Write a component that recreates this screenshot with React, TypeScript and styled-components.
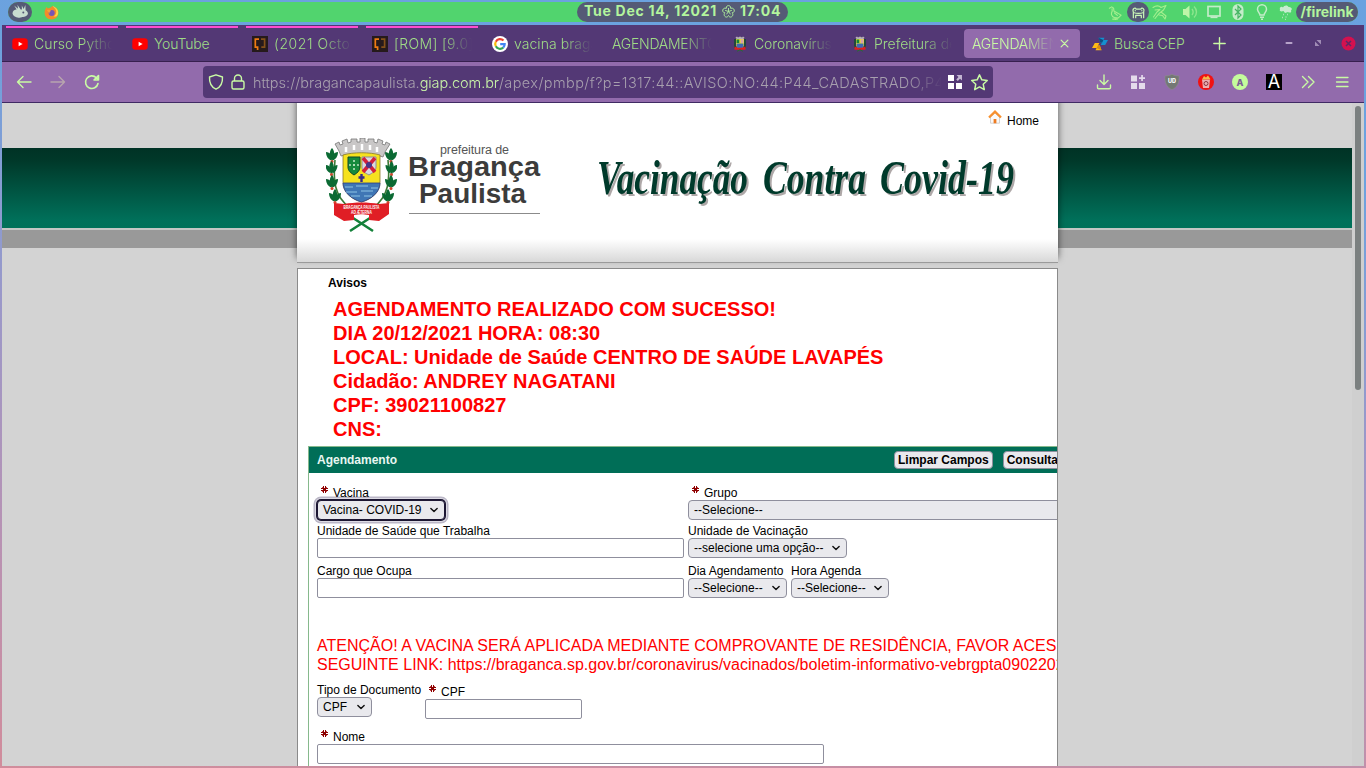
import React from 'react';
import styled, { createGlobalStyle, css } from 'styled-components';

const Global = createGlobalStyle`
  * { box-sizing: border-box; }
  body { margin: 0; overflow: hidden; background: #6fa1dc; }
`;

const ui = `Inter, "Noto Sans", sans-serif`;
const page = `"Liberation Sans", Arial, sans-serif`;

const Desktop = styled.div`
  width: 1366px;
  height: 768px;
  padding: 2px 2px 2px;
  display: flex;
  flex-direction: column;
  overflow: hidden;
  background: linear-gradient(186deg, #6aa2e0 0%, #6ca2de 20%, #9a98c9 48%, #b892b3 75%, #d18c9b 100%);
  font-family: ${ui};
`;

/* ---------- desktop bar ---------- */
const TopBar = styled.header`
  height: 20px;
  margin: 0 6px 3px;
  border-radius: 10px;
  background: #51d46e;
  display: grid;
  grid-template-columns: 569px 211px 1fr;
  align-items: center;
`;
const BarLeft = styled.div`
  display: flex;
  align-items: center;
  gap: 12px;
`;
const Pill = styled.div<{ $w: number }>`
  width: ${(p) => p.$w}px;
  height: 20px;
  border-radius: 10px;
  background: #555a76;
  color: #b3f59d;
  display: flex;
  align-items: center;
  justify-content: center;
  font-size: 14px;
  line-height: 20px;
  font-weight: 700;
  white-space: pre;
`;
const Clock = styled(Pill)`
  gap: 5px;
  letter-spacing: 0.75px;
  padding-bottom: 2px;
`;
const Tray = styled.div`
  display: flex;
  justify-content: flex-end;
  align-items: center;
`;
const TrayIcon = styled.span<{ $w: number; $gap?: number }>`
  width: ${(p) => p.$w}px;
  margin-left: ${(p) => p.$gap ?? 0}px;
  display: flex;
  justify-content: center;
`;

/* ---------- browser window ---------- */
const Browser = styled.div`
  flex: 1;
  min-height: 0;
  display: flex;
  flex-direction: column;
`;
const TabStrip = styled.div`
  height: 37px;
  flex: none;
  background: #533875;
  border-bottom: 1px solid #37204f;
  display: flex;
`;
const Tab = styled.div<{ $active?: boolean; $marked?: boolean }>`
  width: 116px;
  height: 29px;
  margin: 4px 2px 0;
  padding: 0 8px;
  border-radius: 4px;
  display: flex;
  align-items: center;
  gap: 6px;
  color: #9fdc86;
  ${(p) => p.$active && css`background: #926bac; color: #c9fba4; padding-right: 11px;`}
  ${(p) => p.$marked && css`
    &::before {
      content: '';
      position: absolute;
      width: 112px;
      height: 2px;
      margin: -33px 0 0 -6px;
      background: #ff4bd0;
    }
  `}
`;
const TabText = styled.span<{ $sp: number; $fade: boolean }>`
  flex: 1;
  min-width: 0;
  overflow: hidden;
  white-space: nowrap;
  font-size: 14px;
  font-weight: 300;
  line-height: 20px;
  letter-spacing: ${(p) => p.$sp}px;
  ${(p) => p.$fade && css`mask-image: linear-gradient(to left, transparent 0, #000 30px);`}
`;
const NewTab = styled.div`
  width: 34px;
  display: flex;
  align-items: center;
  justify-content: center;
`;
const WindowButtons = styled.div`
  margin-left: auto;
  display: flex;
  align-items: center;
  gap: 19px;
  padding-right: 8px;
`;
const Toolbar = styled.div`
  height: 41px;
  flex: none;
  background: #926bac;
  border-bottom: 1px solid #3f2a63;
  display: flex;
  align-items: center;
`;
const NavButtons = styled.div`
  width: 201px;
  display: flex;
  align-items: center;
  gap: 18px;
  padding-left: 14px;
`;
const UrlBar = styled.div`
  width: 790px;
  height: 32px;
  border-radius: 4px;
  background: #533875;
  display: flex;
  align-items: center;
  padding: 0 5px;
`;
const UrlText = styled.div`
  width: 690px;
  margin: 2px 6px 0 7px;
  overflow: hidden;
  white-space: nowrap;
  font-size: 14.5px;
  font-weight: 300;
  line-height: 20px;
  color: #a79fae;
  mask-image: linear-gradient(to left, transparent 0, #000 36px);
`;
const UrlPart = styled.span<{ $sp: number; $host?: boolean }>`
  letter-spacing: ${(p) => p.$sp}px;
  ${(p) => p.$host && 'color: #c9f5a8;'}
`;
const Extensions = styled.div`
  margin-left: auto;
  padding-right: 14px;
  display: flex;
  align-items: center;
  gap: 18px;
`;
const LetterBadge = styled.span<{ $round?: boolean }>`
  width: 16px;
  height: 16px;
  display: flex;
  align-items: center;
  justify-content: center;
  border-radius: ${(p) => (p.$round ? 8 : 0)}px;
  background: ${(p) => (p.$round ? '#c4fb9c' : '#000')};
  color: ${(p) => (p.$round ? '#7b5a96' : '#fff')};
  font-size: ${(p) => (p.$round ? 9 : 18)}px;
  font-weight: ${(p) => (p.$round ? 800 : 400)};
  line-height: 1;
`;

/* ---------- web page ---------- */
const Viewport = styled.div`
  flex: 1;
  min-height: 0;
  display: flex;
  background: #d3d3d3;
  font-family: ${page};
  color: #000;
`;
const Site = styled.div`
  flex: 1;
  overflow: hidden;
  padding-left: 295px;
  background:
    linear-gradient(#003225, #003829 15%, #00705a 90%, #007159) 0 45px / 100% 80px no-repeat,
    linear-gradient(#c4c6c4, #c4c6c4) 0 125px / 100% 2px no-repeat,
    linear-gradient(#999, #999) 0 127px / 100% 18px no-repeat,
    #d3d3d3;
`;
const ScrollTrack = styled.div`
  width: 12px;
  padding: 3px 3px;
  background: #cfcfcf;
`;
const ScrollThumb = styled.div`
  width: 6px;
  height: 284px;
  border-radius: 3px;
  background: #7b8080;
`;
const Banner = styled.div`
  width: 761px;
  height: 160px;
  border-bottom: 1px solid #9a9a9a;
  background: linear-gradient(#fff 0, #fff 136px, #d8d8d8 159px);
  box-shadow: 0 -5px 7px 0 rgba(0, 0, 0, 0.6);
  display: grid;
  grid-template-columns: 301px 1fr;
`;
const BannerRight = styled.div`
  display: flex;
  flex-direction: column;
`;
const HomeLink = styled.a`
  align-self: flex-end;
  margin: 7px 19px 0 0;
  height: 18px;
  display: flex;
  gap: 5px;
  font-size: 12px;
  line-height: 22px;
`;
const Brand = styled.div`
  display: flex;
  padding: 35px 0 0 29px;
`;
const BrandName = styled.div`
  width: 131px;
  height: 76px;
  margin: 0 0 0 12px;
  border-bottom: 1px solid #8b8b8b;
  color: #3c3c3b;
`;
const Panel = styled.main`
  width: 761px;
  height: 560px;
  margin-top: 5px;
  border: 1px solid #8a8a8a;
  background: #fff;
  overflow: hidden;
  padding: 7px 0 0 10px;
  font-size: 12px;
`;
const PanelTitle = styled.h2`
  margin: 0 0 7px 20px;
  font-size: 12px;
  line-height: 14px;
`;
const Notice = styled.div`
  margin-left: 25px;
  color: #f00;
  font-size: 20px;
  font-weight: 700;
  line-height: 24px;
  padding-bottom: 5px;
`;
const FormBox = styled.section`
  width: 900px;
  height: 400px;
  border: 1px solid #86b98c;
`;
const FormHead = styled.div`
  height: 26px;
  background: #006e57;
  display: flex;
  align-items: center;
  padding-left: 8px;
  color: #e9f7f1;
  font-weight: 700;
`;
const HeadButton = styled.button`
  height: 18px;
  padding: 0 3px;
  margin-right: 10px;
  border: 1px solid #8f8f9d;
  border-radius: 4px;
  background: #e9e9ed;
  color: #000;
  font: 700 12px/14px ${page};
  white-space: nowrap;
`;
const Spacer = styled.div<{ $w: number }>`
  width: ${(p) => p.$w}px;
  flex: none;
`;
const FormBody = styled.div`
  padding: 13px 0 0 8px;
`;
const Row = styled.div<{ $h: number }>`
  height: ${(p) => p.$h}px;
  display: flex;
  gap: 4px;
  align-items: flex-start;
`;
const FieldBox = styled.div<{ $w: number; $drop?: number }>`
  width: ${(p) => p.$w}px;
  flex: none;
  padding-top: ${(p) => p.$drop ?? 0}px;
`;
const LabelLine = styled.label`
  display: flex;
  height: 14px;
  line-height: 14px;
  white-space: nowrap;
  position: relative;
  z-index: 1;
`;
const Mark = styled.svg`
  width: 7px;
  height: 7px;
  margin: 0 5px 0 4px;
`;
const Input = styled.div`
  height: 20px;
  border: 1px solid #8f8f9d;
  border-radius: 2px;
  background: #fff;
`;
const Select = styled.div<{ $w: number; $focus?: boolean }>`
  width: ${(p) => p.$w}px;
  height: 20px;
  padding: 0 5px 0 5px;
  border: 1px solid #8f8f9d;
  border-radius: 4px;
  background: #e9e9ed;
  display: flex;
  align-items: center;
  justify-content: space-between;
  line-height: 18px;
  white-space: nowrap;
  ${(p) => p.$focus && css`
    border-color: #1d1733;
    box-shadow: 0 0 0 1px #1d1733, 0 0 0 2px #dddbe4, 0 0 0 3.5px #bbb7c7;
  `}
`;
const Warning = styled.p`
  margin: 0;
  height: 47px;
  color: #f00;
  font-size: 16px;
  line-height: 19px;
  white-space: nowrap;
`;

/* ---------- icons ---------- */
const Stroke = ({ d, c = '#c9fba4', s = 16, w = 1.4, o = 1 }: { d: string; c?: string; s?: number; w?: number; o?: number }) => (
  <svg width={s} height={s} viewBox="0 0 16 16" fill="none" stroke={c} strokeWidth={w} strokeLinecap="round" strokeLinejoin="round" opacity={o}>
    <path d={d} />
  </svg>
);
const YouTube = () => (
  <svg width="16" height="16" viewBox="0 0 16 16"><rect x="0.3" y="2.3" width="15.4" height="11.4" rx="3" fill="#f00" /><path d="M6.6 5.8v4.4L10.6 8z" fill="#fff" /></svg>
);
const Xda = () => (
  <svg width="16" height="16" viewBox="0 0 16 16" fill="none" strokeWidth="1.7">
    <rect width="16" height="16" fill="#261a1c" />
    <path d="M7 3.1H3.3v8H5.6v3" stroke="#ee7a13" /><path d="M9 3.1h3.6v8H9.3" stroke="#84501a" />
  </svg>
);
const Google = () => (
  <svg width="16" height="16" viewBox="0 0 16 16" fill="none" strokeWidth="2.2">
    <circle cx="8" cy="8" r="8" fill="#fff" />
    <path d="M11.5 4.6A4.8 4.8 0 0 0 3.8 5.7" stroke="#ea4335" /><path d="M3.8 5.7a4.8 4.8 0 0 0 0 4.6" stroke="#fbbc05" />
    <path d="M3.8 10.3a4.8 4.8 0 0 0 7.4 1.3" stroke="#34a853" /><path d="M11.2 11.6A4.6 4.6 0 0 0 12.7 8.1H8.2" stroke="#4285f4" />
  </svg>
);
const CrestMini = () => (
  <svg width="16" height="16" viewBox="0 0 16 16">
    <path d="M3.500 1.500 5 .5l1 1 2-1 2 1 1-1 1.500 1-1.500 2H5z" fill="#b5b0b5" /><path d="M2 3h2v9H2zM12 3h2v9h-2z" fill="#23483b" />
    <path d="M4 3h8v6.500l-2 2.500H6L4 9.500z" fill="#e9dc35" /><path d="M4.500 7.500h7v2.300L10 12H6l-1.500-2z" fill="#3f69b5" />
    <rect x="4.500" y="3.500" width="2.800" height="3.500" fill="#15803d" /><rect x="8.700" y="3.500" width="2.800" height="3.500" fill="#d8a0a8" />
    <path d="M2.500 10.500l3 1.300h5l3-1.300v3.300H2.500z" fill="#e02020" /><path d="M5 15.300 8 13.800l3 1.500" stroke="#286b35" fill="none" />
  </svg>
);
const Correios = () => (
  <svg width="16" height="16" viewBox="0 0 16 16">
    <path d="M6.500 1.800h6L11.400 4H16l-2.800 5H8.600L10 6.600 8.200 6.500z" fill="#1590cf" />
    <path d="M9.500 14.200h-6L4.600 12H0l2.800-5h4.600L6 9.400l1.800.1z" fill="#fdbb16" />
    <path d="M6.500 1.800 11.400 4l-1.200 2.600-2-.1z" fill="#0c4f80" /><path d="M9.500 14.200 4.600 12l1.300-2.500 2 .1z" fill="#d98e10" />
  </svg>
);
const Rabbit = () => (
  <svg width="18" height="16" viewBox="0 0 18 16">
    <path d="M1.500 9.500C1.500 7 3.500 5.700 5.600 5.600L3.200 1.500l3.900 3.300L6.400.8l3.300 4.700 1.200-.1L10.800 1.400l1.800 3.700 1.800-4 .2 5.200c1.700 1 2.400 2.400 2.300 3.200-.2 2.400-2.700 3.200-5.900 3.600-1 1.300-8.500.8-9.500-3.600z" fill="#c8ddd0" />
    <circle cx="12.300" cy="8.600" r="1" fill="#555a76" />
  </svg>
);
const Firefox = () => (
  <svg width="15" height="15" viewBox="0 0 16 16">
    <path d="M1 5.500 2.600 2l1.500 1.800C5 3.200 6 3 6.700 3L9.500.7c.3 1.400 1.300 1.800 2.300 2.600L12.200 2c5.300 4 3.800 13.300-4 13.500C2.300 15.500-.4 10.500 1 5.500z" fill="#f38b2a" />
    <path d="M9.500.7c.3 2 3.600 2.600 3.600 6.800 0 2.400-1.400 4-3 4.600 3 1 5-.9 5-4.200C15.100 4 12 2.600 9.500.7z" fill="#fbd648" />
    <circle cx="8.200" cy="8.600" r="3.200" fill="#7755b5" /><path d="M3 5.500c1.500-.8 3.500-.4 4.500.6L5.800 7.700l.6 2z" fill="#f3a13c" />
  </svg>
);
const Flower = () => (
  <svg width="13" height="13" viewBox="-6.500 -6.500 13 13" fill="none" stroke="#b3f59d" strokeWidth=".9">
    <path d="M-2.100-3.200C-3-6.800 3-6.800 2.100-3.200 5.800-4.500 7.500.8 3.700 1.200 6 4.500 1.500 7.500 0 4-1.500 7.500-6 4.500-3.700 1.200-7.500.8-5.800-4.500-2.100-3.200z" />
    <path d="M0 0v-3.500M0 0l3.300-1.100M0 0l2 2.800M0 0l-2 2.800M0 0l-3.300-1.100" />
  </svg>
);
const Crest = () => {
  const leaves = [16, 29, 43, 57];
  return (
    <svg width="71" height="96" viewBox="0 0 71 96">
      <path d="M9 22C7 42 8 58 24 70M62 22c2 20 1 36-15 48" fill="none" stroke="#3c7a36" strokeWidth="1.600" />
      {leaves.map((y, i) => {
        const x = [6, 5.500, 6, 9][i];
        return [x, 71 - x].map((cx) => (
          <g key={cx} transform={`translate(${cx} ${y})`} fill="#0b6a33">
            <path d="M0-6C3-3 3 3 0 7-3 3-3-3 0-6z" /><path d="M-6-2C-2-2 1 2 1 7-4 6-6 2-6-2zM6-2C2-2-1 2-1 7 4 6 6 2 6-2z" /><circle cy="7.500" r="1.500" fill="#d3452a" />
          </g>
        ));
      })}
      <path d="M13 13 9 6l4-2 1 3 3-1-1-3 5-2 1 4 3-1V1h6v3h3V0h5v4h3V1h6v3l3 1 1-4 5 2-1 3 3 1 1-3 4 2-5 8-2 5C47 15 24 15 15 18z" fill="#c9c7c7" stroke="#777" strokeWidth=".8" />
      <path d="M20 9v5M28 7v5M36 6v6M44 7v5M51 9v5" stroke="#fff" strokeWidth="2.500" />
      <path d="M17 17c10-3 27-3 37 0v27c0 10-8 17-18.500 20C25 61 17 54 17 44z" fill="#f6e21f" stroke="#8a7a2b" strokeWidth=".8" />
      <path d="M17 45h37c0 9-8 16-18.500 19C25 61 17 54 17 45z" fill="#3f76b5" stroke="#2c3e85" strokeWidth=".8" />
      <path d="M19 49h8M30 48h12M45 50h7M20 54h11M35 53h12M25 58h9M38 58h8" stroke="#8ec4e6" strokeWidth="1.200" />
      <path d="M22 19h12v10c0 4-3 6-6 8-3-2-6-4-6-8z" fill="#168a3c" stroke="#10492a" />
      <path d="M28 22v11M23 27h10" stroke="#b9e2bd" strokeWidth="1.600" strokeDasharray="2 2" />
      <path d="M36 19h14v10c0 4-4 6-7 8-4-2-7-4-7-8z" fill="#d9d9df" stroke="#8c8c98" />
      <path d="m37 20 12 14M49 20 37 34" stroke="#d3203c" strokeWidth="3.600" /><circle cx="43" cy="27" r="3" fill="#45358a" />
      <path d="M35.500 36v8M32.500 39.500h6" stroke="#3a2a86" strokeWidth="2.400" />
      <path d="m24 93 23-15M47 93 24 78" stroke="#14813a" strokeWidth="2.600" />
      <path d="M8 65l10 1c11-2 24-2 35 0l10-1v11l-10 7-10-1v-5c-6-1-10-1-15 0v5l-10 1-10-6z" fill="#e01e25" />
      <text x="35.500" y="70.500" textAnchor="middle" textLength="36" lengthAdjust="spacingAndGlyphs" fontSize="4.500" fontWeight="900" fill="#fff" fontFamily="Liberation Sans">BRAGANÇA PAULISTA</text>
      <text x="35.500" y="76" textAnchor="middle" textLength="21" lengthAdjust="spacingAndGlyphs" fontSize="4.500" fontWeight="900" fill="#fff" fontFamily="Liberation Sans">AD ÆTERNA</text>
    </svg>
  );
};
const BrandText = () => (
  <svg width="133" height="74" viewBox="0 0 133 74" fontFamily="Liberation Sans" fill="#3c3c3b">
    <text x="31" y="16" fontSize="12.500" textLength="69" fill="#555">prefeitura de</text>
    <text x="-1" y="38" fontSize="28.500" fontWeight="700" textLength="132" lengthAdjust="spacingAndGlyphs">Bragança</text>
    <text x="10" y="65" fontSize="28.500" fontWeight="700" textLength="107" lengthAdjust="spacingAndGlyphs">Paulista</text>
  </svg>
);
const Script = styled.svg`
  margin-top: 15px;
  filter: drop-shadow(2px 2px 0.5px rgba(120, 110, 110, 0.6));
  font-family: "Liberation Serif", serif;
  font-style: italic;
  font-weight: 700;
`;
const Lettering = () => (
  <Script width="440" height="80" viewBox="0 0 440 80" fill="#003a2b">
    <text x="-1" y="51" fontSize="49" textLength="151" lengthAdjust="spacingAndGlyphs">Vacinação</text>
    <text x="165" y="51" fontSize="49" textLength="103" lengthAdjust="spacingAndGlyphs">Contra</text>
    <text x="282" y="51" fontSize="49" textLength="134" lengthAdjust="spacingAndGlyphs">Covid-19</text>
  </Script>
);
const Home = () => (
  <svg width="14" height="14" viewBox="0 0 14 14">
    <path d="M2.500 7v6.200h9V7L7 2.800z" fill="#fafafa" stroke="#c9c9c9" strokeWidth=".8" />
    <path d="M1 7.500 7 1.700l6 5.800" fill="none" stroke="#f7902f" strokeWidth="2.300" /><path d="M5.600 9h2.800v4.300H5.600z" fill="#ee7b22" />
  </svg>
);
const Req = () => (
  <Mark viewBox="0 0 7 7" fill="#8d0000" shapeRendering="crispEdges">
    <path d="M2 0h1v7H2zM4 0h1v7H4zM0 2h7v1H0zM0 4h7v1H0zM3 3h1v1H3z" />
    <path d="M1 1h1v1H1zM5 1h1v1H5zM1 5h1v1H1zM5 5h1v1H5z" fill="#c05050" />
  </Mark>
);
const Chevron = () => <Stroke d="M3 5.500 8 10.500 13 5.500" c="#111" s={10} w={2.300} />;

const tabs: { t: string; icon?: React.ReactNode; marked?: boolean; active?: boolean; fade?: boolean; sp: number }[] = [
  { t: 'Curso Python', icon: <YouTube />, marked: true, fade: true, sp: 0.1 },
  { t: 'YouTube', icon: <YouTube />, marked: true, sp: -0.2 },
  { t: '(2021 October)', icon: <Xda />, marked: true, fade: true, sp: 0.55 },
  { t: '[ROM] [9.0] Lin', icon: <Xda />, marked: true, fade: true, sp: 0.35 },
  { t: 'vacina bragança', icon: <Google />, fade: true, sp: 0.05 },
  { t: 'AGENDAMENTO', fade: true, sp: -0.25 },
  { t: 'Coronavírus -', icon: <CrestMini />, fade: true, sp: -0.1 },
  { t: 'Prefeitura de B', icon: <CrestMini />, fade: true, sp: 0 },
  { t: 'AGENDAMENTO', active: true, fade: true, sp: -0.25 },
  { t: 'Busca CEP', icon: <Correios />, sp: -0.1 },
];

const SelectField = ({ label, w, box, req, focus, children }: { label: string; w: number; box?: number; req?: boolean; focus?: boolean; children: string }) => (
  <FieldBox $w={box ?? w}>
    <LabelLine>{req && <Req />}{label}</LabelLine>
    <Select $w={w} $focus={focus}>{children}<Chevron /></Select>
  </FieldBox>
);
const InputField = ({ label, w, req, drop }: { label: string; w: number; req?: boolean; drop?: number }) => (
  <FieldBox $w={w} $drop={drop}>
    <LabelLine>{req && <Req />}{label}</LabelLine>
    <Input />
  </FieldBox>
);

export default function App() {
  return (
    <Desktop>
      <Global />
      <TopBar>
        <BarLeft><Pill $w={24}><Rabbit /></Pill><Firefox /></BarLeft>
        <Clock $w={211}>Tue Dec 14, 12021<Flower />17:04</Clock>
        <Tray>
          <TrayIcon $w={24}><Stroke s={15} w={1.200} c="#a5ef8f" d="M1.500 3.500 4 2l2 1.500.3 3 7.700 4.300-3 3-4-.3C3.500 12.500 3 9 4.500 6.500L4.300 4M7 8.500l3 2.500M8 13.500v2M5 15h5" /></TrayIcon>
          <Pill $w={22}><Stroke s={15} w={1.300} c="#c8f5b6" d="M2.500 13.500V7.500C1 4 4.500 2 5.500 4.500h5C11.500 2 15 4 13.500 7.500V13.500M2.500 8q5.500 2 11 0M5 13.500v-2.500h6v2.500M4.500 6h.1M11.500 6h.1" /></Pill>
          <TrayIcon $w={22}><Stroke s={16} w={1.100} c="#a5ef8f" d="M1 3.500c3-2 6-2 8 0l5-2-2.500 4.500L7 9.500l-4 5M3 6l5-.5L5 8 1.500 13M9 8l5 4-1 3-2.500-3.500L7 11" /></TrayIcon>
          <TrayIcon $w={24} $gap={7}>
            <svg width="16" height="16" viewBox="0 0 16 16" fill="none" stroke="#8ee68e" strokeWidth="1.400"><path d="M1 5h2.500L7.500 1.500v13L3.500 11H1z" fill="#bdf5a8" stroke="none" /><path d="M10 5c1.500 2 1.500 4 0 6M12 2.500c3.300 3 3.300 8 0 11" /></svg>
          </TrayIcon>
          <TrayIcon $w={24}><svg width="14" height="14" viewBox="0 0 14 14" fill="none" stroke="#c3ecc9" strokeWidth="1.700"><rect x="1" y="1.500" width="12" height="9.500" /><path d="M3.500 12.300h7" /></svg></TrayIcon>
          <TrayIcon $w={24}><svg width="12" height="16" viewBox="0 0 12 16"><rect x=".5" width="11" height="16" rx="5.500" fill="#c3ecc9" /><path d="m3 5 6 6-3 3V2l3 3-6 6" fill="none" stroke="#45b564" strokeWidth="1.200" /></svg></TrayIcon>
          <TrayIcon $w={24}><svg width="12" height="16" viewBox="0 0 12 16" fill="none" stroke="#c3ecc9" strokeWidth="1.500"><path d="M4 11C4 9 1.500 8 1.500 5.300a4.500 4.500 0 0 1 9 0C10.500 8 8 9 8 11zM4 13.200h4M5 15.200h2" /></svg></TrayIcon>
          <TrayIcon $w={22}><svg width="15" height="15" viewBox="0 0 15 15" fill="#c8ecd0"><path d="M2 4.500C1 2 4 .8 5 2.500 6-.2 10-.2 10.500 2 13 1.500 15 4 13 5.500 14 8 11 8 10 7L7 8 5.500 6C3.500 7 1 6.500 2 4.500z" /><path d="M5 9.500h1M9 9.500h1M4 12.500h1M7.500 12h1M7 14.500h1" stroke="#a8e3b6" strokeWidth="1.300" /></svg></TrayIcon>
          <Pill $w={62}>/firelink</Pill>
        </Tray>
      </TopBar>

      <Browser>
        <TabStrip>
          {tabs.map((tab, i) => (
            <Tab key={i} $active={tab.active} $marked={tab.marked}>
              {tab.icon}
              <TabText $sp={tab.sp} $fade={!!tab.fade}>{tab.t}</TabText>
              {tab.active && <Stroke d="M2 2l12 12M14 2 2 14" s={9} w={2.200} />}
            </Tab>
          ))}
          <NewTab><Stroke d="M8 1v14M1 8h14" s={13} w={1.700} /></NewTab>
          <WindowButtons>
            <Stroke d="M4.500 8h7" s={12} w={2.400} c="#b7a3c9" />
            <svg width="8" height="8" viewBox="0 0 8 8" fill="#a08cb5"><path d="M2.500 1H7v4.500zM1 2.500 5.500 7H1z" /></svg>
            <svg width="15" height="15" viewBox="0 0 15 15"><circle cx="7.500" cy="7.500" r="7" fill="#d3114f" /><path d="m5 5 5 5M10 5l-5 5" stroke="#5b2a66" strokeWidth="1.500" /></svg>
          </WindowButtons>
        </TabStrip>

        <Toolbar>
          <NavButtons>
            <Stroke d="M15 8H1.500M7 2.500 1.500 8 7 13.500" />
            <Stroke d="M1 8h13.500M9 2.500 14.500 8 9 13.500" c="#b8a5ae" />
            <Stroke d="M14 9.500A6.300 6.300 0 1 1 12.300 3.700L14.200 5.500M14.500 1.500v4.500H10z" w={1.600} />
          </NavButtons>
          <UrlBar>
            <Stroke d="M8 .8 14.500 3c.3 6-1.500 10-6.500 12.200C3 13 1.200 9 1.500 3z" />
            <Spacer $w={6} />
            <Stroke d="M3.500 7h9q1.500 0 1.500 1.500V13.500q0 1.500-1.500 1.500h-9Q2 15 2 13.500V8.500Q2 7 3.500 7zM4.500 7V4.500a3.500 3.500 0 0 1 7 0V7" />
            <UrlText>
              <UrlPart $sp={0}>https://bragancapaulista.</UrlPart>
              <UrlPart $sp={-0.1} $host>giap.com.br</UrlPart>
              <UrlPart $sp={0.4}>/apex/pmbp/f?p=1317:44::AVISO:NO:44:P44_CADASTRADO,P44</UrlPart>
            </UrlText>
            <svg width="14" height="14" viewBox="0 0 14 14" fill="#fff"><path d="M0 0h6v6H0zM0 8h6v6H0zM8 8h6v6H8z" /><path d="M8.500 0H14v5.500l-2-1.800L9.800 6 8.300 4.500 10.500 2z" fill="#c4b7d2" /></svg>
            <Spacer $w={9} />
            <Stroke d="m8 .8 2.200 4.700 5.100.6-3.800 3.500 1 5.100L8 12.200l-4.500 2.500 1-5.100L.7 6.100l5.100-.6z" s={17} />
          </UrlBar>
          <Extensions>
            <Stroke d="M8 1v9M4 6.500 8 10.500l4-4M1.500 11v2.500q0 1.200 1.200 1.200h10.600q1.200 0 1.200-1.200V11" />
            <svg width="16" height="16" viewBox="0 0 16 16" fill="#e4dbeb"><path d="M1 1.500h6v6H1zM1 9h6v6H1zM9 9h6v6H9zM11.200 1h1.700v2.200H15v1.700h-2.100V7h-1.700V4.900H9V3.200h2.200z" /></svg>
            <svg width="16" height="16" viewBox="0 0 16 16"><path d="M8 .3c2 1.200 4 1.600 7 1.600C15.300 9 13.500 13 8 15.700 2.500 13 .7 9 1 1.900 4 1.900 6 1.500 8 .3z" fill="#747875" stroke="#8d8f8f" strokeWidth=".6" /><text x="8" y="9" fontSize="5.500" fontWeight="800" fill="#fff" textAnchor="middle">UD</text></svg>
            <svg width="16" height="16" viewBox="0 0 16 16"><circle cx="8" cy="8" r="8" fill="#f01212" /><path d="M4 5.500h8L11 14H5z" fill="#eaaeb0" /><path d="M4 5.500 6 2l2 1.500L10 1.500l2.500 3.800z" fill="#f2bd4b" /><circle cx="8" cy="9.500" r="2" fill="none" stroke="#8a3440" /></svg>
            <LetterBadge $round>A</LetterBadge>
            <LetterBadge>A</LetterBadge>
            <Stroke d="M2.500 2.500 8 8l-5.500 5.500M8.500 2.500 14 8l-5.500 5.500" />
            <Stroke d="M2.500 3.500h11.500M2.500 8h11.500M2.500 12.500h11.500" w={1.300} />
          </Extensions>
        </Toolbar>

        <Viewport>
          <Site>
            <Banner>
              <Brand><Crest /><BrandName><BrandText /></BrandName></Brand>
              <BannerRight>
                <HomeLink><Home />Home</HomeLink>
                <Lettering />
              </BannerRight>
            </Banner>
            <Panel>
              <PanelTitle>Avisos</PanelTitle>
              <Notice>
                <div>AGENDAMENTO REALIZADO COM SUCESSO!</div>
                <div>DIA 20/12/2021 HORA: 08:30</div>
                <div>LOCAL: Unidade de Saúde CENTRO DE SAÚDE LAVAPÉS</div>
                <div>Cidadão: ANDREY NAGATANI</div>
                <div>CPF: 39021100827</div>
                <div>CNS:</div>
              </Notice>
              <FormBox>
                <FormHead>Agendamento<Spacer $w={497} /><HeadButton>Limpar Campos</HeadButton><HeadButton>Consultar</HeadButton></FormHead>
                <FormBody>
                  <Row $h={38}>
                    <SelectField label="Vacina" w={128} box={367} req focus>Vacina- COVID-19</SelectField>
                    <SelectField label="Grupo" w={420} req>--Selecione--</SelectField>
                  </Row>
                  <Row $h={40}>
                    <InputField label="Unidade de Saúde que Trabalha" w={367} />
                    <SelectField label="Unidade de Vacinação" w={159}>--selecione uma opção--</SelectField>
                  </Row>
                  <Row $h={72}>
                    <InputField label="Cargo que Ocupa" w={367} />
                    <SelectField label="Dia Agendamento" w={99}>--Selecione--</SelectField>
                    <SelectField label="Hora Agenda" w={98}>--Selecione--</SelectField>
                  </Row>
                  <Warning>
                    ATENÇÃO! A VACINA SERÁ APLICADA MEDIANTE COMPROVANTE DE RESIDÊNCIA, FAVOR ACESSAR O<br />
                    SEGUINTE LINK: https://braganca.sp.gov.br/coronavirus/vacinados/boletim-informativo-vebrgpta09022021
                  </Warning>
                  <Row $h={45}>
                    <SelectField label="Tipo de Documento" w={55} box={104}>CPF</SelectField>
                    <InputField label="CPF" w={157} req drop={2} />
                  </Row>
                  <InputField label="Nome" w={507} req drop={2} />
                </FormBody>
              </FormBox>
            </Panel>
          </Site>
          <ScrollTrack><ScrollThumb /></ScrollTrack>
        </Viewport>
      </Browser>
    </Desktop>
  );
}
